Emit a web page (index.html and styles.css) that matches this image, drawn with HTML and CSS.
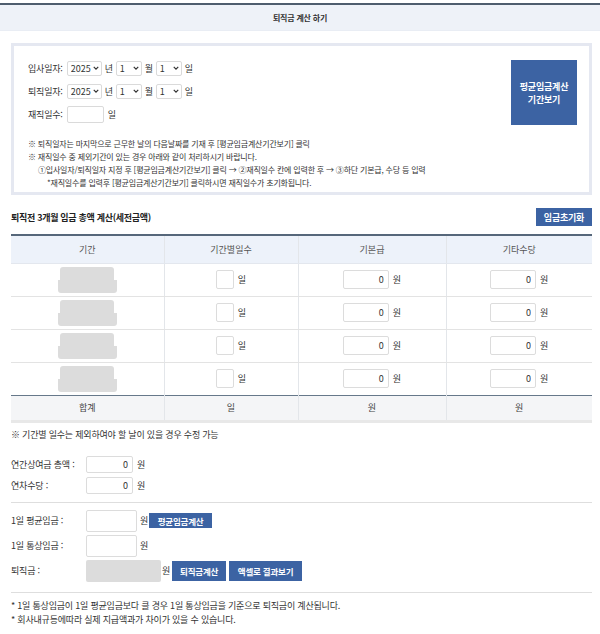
FILE: index.html
```html
<!DOCTYPE html>
<html lang="ko">
<head>
  <meta charset="UTF-8">
  <meta name="viewport" content="width=device-width, initial-scale=1.0">
  <title>퇴직금 계산 하기</title>
  <link rel="stylesheet" href="styles.css">
</head>
<body>
  <!-- 상단 제목 -->
  <div class="title-bar">퇴직금 계산 하기</div>

  <div class="content">
    <!-- 입사/퇴직일자 선택 -->
    <div class="period-box">
      <div class="period-top">
        <div class="date-rows">
          <div class="date-row">
            <span class="label">입사일자:</span>
            <span class="sel sel-year"><select><option>2025</option></select><svg class="chev" viewBox="0 0 8 5"><path d="M1 1l3 3 3-3" /></svg></span>
            <span>년</span>
            <span class="sel"><select><option>1</option></select><svg class="chev" viewBox="0 0 8 5"><path d="M1 1l3 3 3-3" /></svg></span>
            <span>월</span>
            <span class="sel"><select><option>1</option></select><svg class="chev" viewBox="0 0 8 5"><path d="M1 1l3 3 3-3" /></svg></span>
            <span>일</span>
          </div>
          <div class="date-row">
            <span class="label">퇴직일자:</span>
            <span class="sel sel-year"><select><option>2025</option></select><svg class="chev" viewBox="0 0 8 5"><path d="M1 1l3 3 3-3" /></svg></span>
            <span>년</span>
            <span class="sel"><select><option>1</option></select><svg class="chev" viewBox="0 0 8 5"><path d="M1 1l3 3 3-3" /></svg></span>
            <span>월</span>
            <span class="sel"><select><option>1</option></select><svg class="chev" viewBox="0 0 8 5"><path d="M1 1l3 3 3-3" /></svg></span>
            <span>일</span>
          </div>
          <div class="date-row days-row">
            <span class="label">재직일수:</span>
            <input type="text" class="days-input">
            <span>일</span>
          </div>
        </div>
        <button class="btn btn-period">평균임금계산<br>기간보기</button>
      </div>
      <div class="notice">
        <p>※ 퇴직일자는 마지막으로 근무한 날의 다음날짜를 기재 후 [평균임금계산기간보기] 클릭</p>
        <p>※ 재직일수 중 제외기간이 있는 경우 아래와 같이 처리하시기 바랍니다.</p>
        <p class="indent1">①입사일자/퇴직일자 지정 후 [평균임금계산기간보기] 클릭 → ②재직일수 칸에 입력한 후 → ③하단 기본급, 수당 등 입력</p>
        <p class="indent2">*재직일수를 입력후 [평균임금계산기간보기] 클릭하시면 재직일수가 초기화됩니다.</p>
      </div>
    </div>

    <!-- 3개월 임금 -->
    <div class="section-head">
      <h2>퇴직전 3개월 임금 총액 계산(세전금액)</h2>
      <button class="btn btn-reset">임금초기화</button>
    </div>

    <table class="wage-table">
      <colgroup>
        <col style="width:153px">
        <col style="width:134px">
        <col style="width:148px">
        <col style="width:146px">
      </colgroup>
      <thead>
        <tr><th>기간</th><th>기간별일수</th><th>기본급</th><th>기타수당</th></tr>
      </thead>
      <tbody id="wageRows"></tbody>
      <tfoot>
        <tr><td>합계</td><td>일</td><td>원</td><td>원</td></tr>
      </tfoot>
    </table>

    <p class="table-note">※ 기간별 일수는 제외하여야 할 날이 있을 경우 수정 가능</p>

    <div class="form-group group-extra">
      <div class="form-row">
        <span class="form-label">연간상여금 총액 :</span>
        <input type="text" class="num-input" value="0">
        <span>원</span>
      </div>
      <div class="form-row">
        <span class="form-label">연차수당 :</span>
        <input type="text" class="num-input" value="0">
        <span>원</span>
      </div>
    </div>

    <div class="form-group group-result">
      <div class="form-row">
        <span class="form-label">1일 평균임금 :</span>
        <input type="text" class="wage-input">
        <span>원</span>
        <button class="btn btn-small">평균임금계산</button>
      </div>
      <div class="form-row">
        <span class="form-label">1일 통상임금 :</span>
        <input type="text" class="wage-input">
        <span>원</span>
      </div>
      <div class="form-row">
        <span class="form-label">퇴직금 :</span>
        <input type="text" class="result-input" disabled>
        <span class="won-tight">원</span>
        <button class="btn btn-calc">퇴직금계산</button>
        <button class="btn btn-excel">액셀로 결과보기</button>
      </div>
    </div>

    <div class="foot-notes">
      <p>* 1일 통상임금이 1일 평균임금보다 클 경우 1일 통상임금을 기준으로 퇴직금이 계산됩니다.</p>
      <p>* 회사내규등에따라 실제 지급액과가 차이가 있을 수 있습니다.</p>
    </div>
  </div>

  <script>
    // 기간별 행 4개 생성
    const wageRows = document.getElementById("wageRows");
    for (let i = 0; i < 4; i++) {
      const tr = document.createElement("tr");
      tr.innerHTML =
        '<td><div class="period-blank"><span class="blank-top"></span><span class="blank-bottom"></span></div></td>' +
        '<td><input type="text" class="day-input"><span class="unit">일</span></td>' +
        '<td><input type="text" class="money-input" value="0"><span class="unit">원</span></td>' +
        '<td><input type="text" class="money-input" value="0"><span class="unit">원</span></td>';
      wageRows.appendChild(tr);
    }
  </script>
</body>
</html>
```

FILE: styles.css
```css
/* 기본 설정 */
* {
  box-sizing: border-box;
}
body {
  margin: 0;
  font-family: "Noto Sans CJK KR", "Noto Sans", sans-serif;
  font-size: 9px;
  color: #333;
  background: #fff;
}
p {
  margin: 0;
}
input, select, button {
  font-family: inherit;
}

/* 상단 제목 */
.title-bar {
  margin-top: 3px;
  height: 28px;
  border-top: 2px solid #4e5d6e;
  border-bottom: 1px solid #e9edf4;
  background: #eef2f8;
  display: flex;
  align-items: center;
  justify-content: center;
  font-size: 8px;
  font-weight: bold;
  letter-spacing: -0.2px;
  color: #333;
}

.content {
  padding: 12px 8px 0 11px;
}

/* 기간 설정 박스 */
.period-box {
  border: 3px solid #e5e8f1;
  padding: 14px 12px 3px 14px;
}
.period-top {
  display: flex;
  justify-content: space-between;
  align-items: flex-start;
}
.date-rows {
  display: flex;
  flex-direction: column;
  gap: 7px;
}
.date-row {
  display: flex;
  align-items: center;
  gap: 3px;
  height: 16px;
  letter-spacing: -0.2px;
}
.date-row .label {
  margin-right: 1px;
}
.days-row {
  height: 17px;
}
.sel {
  position: relative;
  display: inline-block;
}
.sel select {
  appearance: none;
  -webkit-appearance: none;
  width: 26px;
  height: 15px;
  padding: 0 0 0 3px;
  border: 1px solid #dadada;
  border-radius: 2px;
  background: #fff;
  font-size: 9px;
  color: #333;
  display: block;
}
.sel-year select {
  width: 35px;
}
.chev {
  position: absolute;
  right: 3px;
  top: 5px;
  width: 6px;
  height: 4px;
  pointer-events: none;
  fill: none;
  stroke: #333;
  stroke-width: 1.6;
}
.days-input {
  width: 37px;
  height: 17px;
  border: 1px solid #dadada;
  border-radius: 2px;
  margin-right: 1px;
}

.btn {
  border: none;
  background: #3c63a3;
  color: #fff;
  font-weight: bold;
  cursor: pointer;
  padding: 0;
  letter-spacing: -0.2px;
}
.btn-period {
  width: 66px;
  height: 65px;
  font-size: 9px;
  line-height: 13px;
}

.notice {
  margin-top: 12px;
  font-size: 8px;
  line-height: 13px;
  letter-spacing: -0.2px;
  color: #333;
}
.notice .indent1 {
  padding-left: 10px;
}
.notice .indent2 {
  padding-left: 19px;
}

/* 3개월 임금 */
.section-head {
  margin-top: 13px;
  display: flex;
  justify-content: space-between;
  align-items: center;
}
.section-head h2 {
  margin: 0;
  font-size: 9px;
  letter-spacing: -0.3px;
  color: #222;
}
.btn-reset {
  width: 56px;
  height: 18px;
  font-size: 9px;
}

.wage-table {
  width: 100%;
  margin-top: 8px;
  border-collapse: collapse;
  table-layout: fixed;
}
.wage-table th {
  height: 28px;
  border-top: 2px solid #56677a;
  border-bottom: 1px solid #e3e7ee;
  background: #edf2fa;
  font-weight: normal;
  color: #555;
}
.wage-table th + th,
.wage-table td + td {
  border-left: 1px solid #e3e6ea;
}
.wage-table tbody td {
  height: 33px;
  border-bottom: 1px solid #e3e3e3;
  text-align: center;
  vertical-align: middle;
}
.wage-table tbody tr:last-child td {
  border-bottom: none;
}
.period-blank {
  display: inline-flex;
  flex-direction: column;
  align-items: center;
  vertical-align: middle;
}
.blank-top {
  display: block;
  width: 54px;
  height: 13px;
  background: #dcdcdc;
  border-radius: 3px 3px 0 0;
}
.blank-bottom {
  display: block;
  width: 59px;
  height: 13px;
  background: #dcdcdc;
  border-radius: 0 0 3px 3px;
}
.day-input {
  width: 18px;
  height: 19px;
  border: 1px solid #dcdcdc;
  border-radius: 2px;
  vertical-align: middle;
}
.money-input {
  width: 46px;
  height: 19px;
  border: 1px solid #dcdcdc;
  border-radius: 2px;
  text-align: right;
  padding: 0 4px 0 0;
  font-size: 9px;
  color: #333;
  vertical-align: middle;
}
.unit {
  display: inline-block;
  margin-left: 4px;
  vertical-align: middle;
}
.wage-table tfoot td {
  height: 26px;
  border-top: 1px solid #66788a;
  border-bottom: 3px solid #e8e8e8;
  background: #f4f5f7;
  text-align: center;
  color: #444;
}

.table-note {
  margin-top: 5px;
  line-height: 13px;
  letter-spacing: -0.2px;
}

/* 입력 폼 */
.form-group {
  display: flex;
  flex-direction: column;
}
.group-extra {
  margin-top: 15px;
  gap: 4px;
  padding-bottom: 8px;
  border-bottom: 1px solid #dedede;
}
.group-result {
  padding: 7px 0 10px;
  gap: 3px;
  border-bottom: 1px solid #dedede;
}
.form-row {
  display: flex;
  align-items: center;
  letter-spacing: -0.2px;
}
.group-extra .form-row {
  height: 17px;
}
.group-result .form-row {
  height: 22px;
}
.form-label {
  width: 75px;
}
.num-input {
  width: 47px;
  height: 17px;
  border: 1px solid #dcdcdc;
  border-radius: 2px;
  text-align: right;
  padding: 0 4px 0 0;
  font-size: 9px;
  color: #333;
  margin-right: 4px;
}
.wage-input {
  width: 51px;
  height: 22px;
  border: 1px solid #dcdcdc;
  border-radius: 2px;
  margin-right: 3px;
}
.result-input {
  width: 75px;
  height: 22px;
  border: none;
  border-radius: 2px;
  background: #dcdcdc;
  margin-right: 1px;
}
.btn-small {
  width: 63px;
  height: 15px;
  margin-left: 1px;
  font-size: 8.5px;
}
.btn-calc {
  width: 54px;
  height: 20px;
  margin-left: 2px;
  font-size: 8.5px;
}
.btn-excel {
  width: 73px;
  height: 20px;
  margin-left: 3px;
  font-size: 8.5px;
}

.foot-notes {
  padding-top: 6px;
  line-height: 14px;
  letter-spacing: -0.2px;
  color: #333;
}
```
